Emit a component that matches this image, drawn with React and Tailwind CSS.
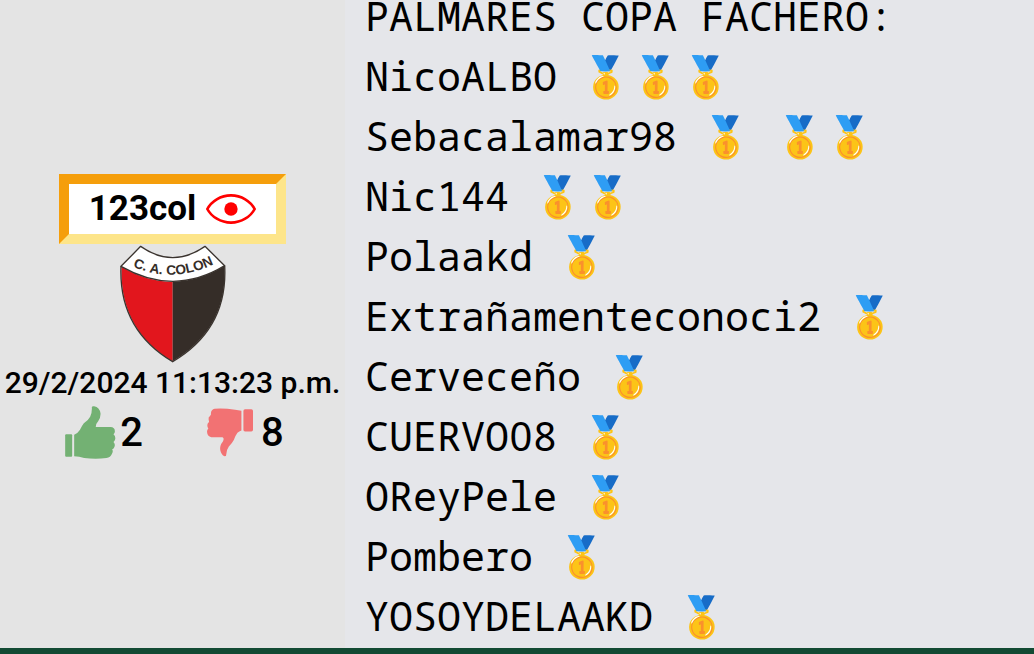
const winners = [
  { name: "NicoALBO", medals: "🥇🥇🥇" },
  { name: "Sebacalamar98", medals: "🥇 🥇🥇" },
  { name: "Nic144", medals: "🥇🥇" },
  { name: "Polaakd", medals: "🥇" },
  { name: "Extrañamenteconoci2", medals: "🥇" },
  { name: "Cerveceño", medals: "🥇" },
  {
    // The plain zero comes from the proportional family, without a slash.
    name: (
      <>
        CUERVO
        <span className="inline-block w-6 text-center font-['Noto_Sans',sans-serif] leading-none">0</span>8
      </>
    ),
    medals: "🥇",
  },
  { name: "OReyPele", medals: "🥇" },
  { name: "Pombero", medals: "🥇" },
  { name: "YOSOYDELAAKD", medals: "🥇" },
];

function EyeIcon() {
  return (
    <svg viewBox="0 0 150 90" className="h-[30px] w-[50px]" fill="none" aria-hidden="true">
      <path
        d="M4 45C16 22 44 4 75 4s59 18 71 41c-12 23-40 41-71 41S16 68 4 45Z"
        stroke="#ff0000"
        strokeWidth="8"
        strokeLinejoin="round"
      />
      <circle cx="75" cy="45" r="20" fill="#ff0000" />
    </svg>
  );
}

function ColonShield() {
  return (
    <svg
      viewBox="22 24 330 357"
      className="h-[119px] w-[110px]"
      role="img"
      aria-label="Club Atlético Colón"
    >
      <path d="M33 92C30 165 42 290 186 376V138Q100 134 33 92Z" fill="#e2161d" />
      <path d="M341 90C346 165 332 290 186 376V138Q270 134 341 90Z" fill="#352d28" />
      <path
        d="M31 91C28 165 40 290 186 377C334 290 346 165 342 89"
        fill="none"
        stroke="#3a332e"
        strokeWidth="4"
      />
      <path
        d="M90 31Q186 99 283 31L342 89Q190 182 31 91Z"
        fill="#fff"
        stroke="#3a332e"
        strokeWidth="4"
        strokeLinejoin="round"
      />
      <path id="shield-arc" d="M50 84Q186 152 326 76" fill="none" />
      <text
        className="font-['Liberation_Sans',sans-serif] text-[41px] font-bold"
        fill="#352d28"
        textAnchor="middle"
      >
        <textPath href="#shield-arc" startOffset="50%">
          C. A. COLON
        </textPath>
      </text>
    </svg>
  );
}

function ThumbUp() {
  return (
    <svg viewBox="18 20 152 159" className="h-[53px] w-[51px]" fill="#73b173" aria-hidden="true">
      <rect x="18" y="105" width="21" height="67" rx="3" />
      <path d="M45 106Q55 103 62 92Q68 80 74 72Q88 62 93 52Q99 42 98 23Q99 20 105 21Q121 24 124 42Q125 54 117 66Q109 75 110 83H154Q167 84 167 95Q168 100 163 105Q170 111 168 120Q167 125 163 128Q169 134 166 142Q164 148 159 150Q163 156 158 164Q154 174 142 176Q110 180 75 176Q60 172 45 171Z" />
    </svg>
  );
}

function ThumbDown() {
  return (
    <svg viewBox="23 26 139 148" className="h-[49px] w-[46px]" fill="#f27273" aria-hidden="true">
      <rect x="133" y="30" width="29" height="67" rx="5" />
      <path d="M127 34L108 31Q75 26 46 28Q36 31 35 40Q36 47 32 50Q26 53 28 62Q30 66 29 68Q23 73 24 79Q24 84 27 88Q23 92 23 98Q24 112 36 114H70Q76 117 71 127Q61 139 63 153Q66 168 76 172Q82 172 81 167Q81 153 89 142Q99 133 104 123Q109 109 115 101Q120 96 127 94Z" />
    </svg>
  );
}

export default function App() {
  return (
    <main className="min-h-screen bg-[#124a33] text-black">
      <article className="grid grid-cols-[345px_1fr] bg-[#e5e6ea]">
        <aside className="flex flex-col items-center justify-center bg-[#e4e4e4] pb-3 font-['Roboto',sans-serif]">
          <a
            href="#123col"
            className="flex items-center gap-[10px] border-[10px] border-t-[#f59e0b] border-r-[#fde58a] border-b-[#fde58a] border-l-[#f59e0b] bg-white px-5 text-[35px] leading-[50px] font-bold"
          >
            123col
            <EyeIcon />
          </a>
          <ColonShield />
          <time dateTime="2024-02-29T23:13:23" className="text-[30px] leading-10 font-medium whitespace-nowrap">
            29/2/2024 11:13:23 p.m.
          </time>
          <div className="flex h-[60px] items-center gap-16 pl-1 text-[40px] font-medium">
            <button type="button" aria-label="Me gusta: 2" className="flex items-center gap-1">
              <ThumbUp />2
            </button>
            <button type="button" aria-label="No me gusta: 8" className="flex items-center gap-2">
              <ThumbDown />8
            </button>
          </div>
        </aside>
        <section className="px-5 pb-[2px] font-['Noto_Sans_Mono','Liberation_Mono',monospace] text-[40px]">
          <h1 className="mb-[14px] leading-8">PALMARES COPA FACHERO:</h1>
          <ul className="leading-[60px]">
            {winners.map((winner, i) => (
              <li key={i}>
                {winner.name} {winner.medals}
              </li>
            ))}
          </ul>
        </section>
      </article>
    </main>
  );
}
